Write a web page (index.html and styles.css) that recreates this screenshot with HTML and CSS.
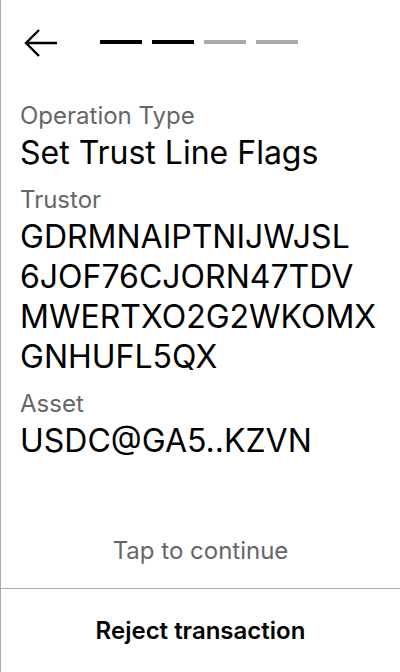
FILE: index.html
```html
<!DOCTYPE html>
<html>
<head>
<meta charset="utf-8">
<link rel="stylesheet" href="styles.css">
</head>
<body>
<div class="screen">
  <header class="top">
    <svg class="back" width="34" height="30" viewBox="0 0 34 30" aria-hidden="true">
      <path d="M2 15 H33 M15 2 L2 15 L15 28" fill="none" stroke="#000" stroke-width="2.4" stroke-linecap="butt" stroke-linejoin="miter"/>
    </svg>
    <div class="steps">
      <span class="step done"></span>
      <span class="step done"></span>
      <span class="step"></span>
      <span class="step"></span>
    </div>
  </header>
  <main class="details">
    <div class="field">
      <div class="label">Operation Type</div>
      <div class="value">Set Trust Line Flags</div>
    </div>
    <div class="field">
      <div class="label">Trustor</div>
      <div class="value addr">
        <span class="line">GDRMNAIPTNIJWJSL</span>
        <span class="line">6JOF76CJORN47TDV</span>
        <span class="line">MWERTXO2G2WKOMX</span>
        <span class="line">GNHUFL5QX</span>
      </div>
    </div>
    <div class="field">
      <div class="label">Asset</div>
      <div class="value">USDC@GA5..KZVN</div>
    </div>
  </main>
  <div class="tap">Tap to continue</div>
  <div class="reject">Reject transaction</div>
</div>
</body>
</html>
```
FILE: styles.css
```css
html, body {
  margin: 0;
  padding: 0;
  background: #fff;
}
body {
  font-family: Inter, "Noto Sans", sans-serif;
  color: #000;
}
.screen {
  box-sizing: border-box;
  width: 400px;
  height: 672px;
  border-left: 1px solid #aaa;
  display: flex;
  flex-direction: column;
}
.top {
  display: flex;
  align-items: center;
  height: 30px;
  padding-top: 28px;
  padding-left: 23px;
}
.back {
  display: block;
}
.steps {
  display: flex;
  gap: 10px;
  margin-left: 42px;
  margin-top: -2px;
}
.step {
  width: 42px;
  height: 4px;
  background: #aaa;
}
.step.done {
  background: #000;
}
.details {
  flex: 1;
  padding: 43px 19px 0 19px;
  display: flex;
  flex-direction: column;
  gap: 12px;
}
.field {
  display: flex;
  flex-direction: column;
  gap: 3px;
}
.label {
  font-size: 24px;
  line-height: 29px;
  color: #666;
}
.value {
  font-size: 32px;
  line-height: 40px;
}
.addr .line {
  display: block;
}
.tap {
  text-align: center;
  font-size: 24px;
  line-height: 29px;
  color: #666;
  padding-bottom: 23px;
}
.reject {
  border-top: 1px solid #aaa;
  height: 83px;
  display: flex;
  align-items: center;
  justify-content: center;
  font-size: 24px;
  font-weight: 600;
}
```
